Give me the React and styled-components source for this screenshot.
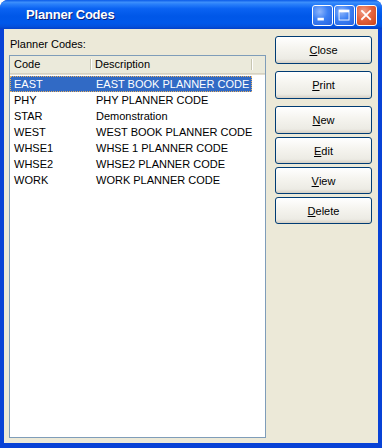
import React from "react";
import styled, { createGlobalStyle } from "styled-components";

const GlobalStyle = createGlobalStyle`
  html, body {
    margin: 0;
    padding: 0;
    background: #ffffff;
  }
  body {
    font-family: "Liberation Sans", Arial, sans-serif;
    font-size: 11px;
  }
`;

const Window = styled.div`
  width: 382px;
  height: 448px;
  display: flex;
  flex-direction: column;
  background: #0842d6;
  border-radius: 8px 8px 0 0;
  overflow: hidden;
`;

const TitleBar = styled.div`
  height: 29px;
  flex-shrink: 0;
  display: flex;
  align-items: center;
  padding: 0 5px 0 26px;
  background: linear-gradient(
    180deg,
    #0a5ae8 0%,
    #3d8ffb 8%,
    #2a80fa 14%,
    #0a62f2 30%,
    #0057e8 55%,
    #0058ea 80%,
    #0350dc 92%,
    #0340c8 100%
  );
`;

const Title = styled.div`
  flex: 1;
  color: #ffffff;
  font-family: "Liberation Sans", Arial, sans-serif;
  font-weight: bold;
  font-size: 13px;
  letter-spacing: -0.2px;
  text-shadow: 1px 1px 0 #0a1f7a;
`;

const Controls = styled.div`
  display: flex;
  gap: 1px;
  margin-top: 1px;
`;

const CtlButton = styled.div`
  width: 21px;
  height: 21px;
  box-sizing: border-box;
  border: 1px solid #ffffff;
  border-radius: 3px;
  display: flex;
  align-items: center;
  justify-content: center;
  background: ${(p) =>
    p.$close
      ? "radial-gradient(circle at 35% 30%, #f0a08a 0%, #e4643f 45%, #cc4418 100%)"
      : "radial-gradient(circle at 35% 30%, #8fb6fb 0%, #3c80f4 45%, #2461e0 100%)"};
`;

const Body = styled.div`
  flex: 1;
  margin: 0 4px 5px 4px;
  background: #ece9d8;
  display: flex;
  gap: 9px;
  padding: 7px 0 0 5px;
`;

const LeftPane = styled.div`
  display: flex;
  flex-direction: column;
  width: 257px;
`;

const Label = styled.div`
  color: #000000;
  height: 19px;
  line-height: 17px;
  padding-left: 1px;
`;

const ListBox = styled.div`
  flex: 1;
  margin-bottom: 5px;
  border: 1px solid #7f9db9;
  background: #ffffff;
`;

const HeaderRow = styled.div`
  display: flex;
  height: 17px;
  background: #ebeadb;
  border-bottom: 1px solid #d6d2c2;
  box-shadow: 0 1px 0 #e2ded0, 0 2px 0 #ffffff;
  margin-bottom: 2px;
`;

const HeaderCell = styled.div`
  width: ${(p) => p.$w}px;
  box-sizing: border-box;
  padding-left: 4px;
  line-height: 17px;
  color: #000000;
  position: relative;
  &::after {
    content: "";
    position: absolute;
    right: 0;
    top: 3px;
    bottom: 3px;
    width: 1px;
    background: #c7c5b2;
    box-shadow: 1px 0 0 #ffffff;
  }
`;

const Row = styled.div`
  display: flex;
  height: 16px;
  width: 242px;
  box-sizing: border-box;
  align-items: center;
  color: ${(p) => (p.$selected ? "#ffffff" : "#000000")};
  background: ${(p) => (p.$selected ? "#316ac5" : "transparent")};
  border: 1px dotted ${(p) => (p.$selected ? "#e8b060" : "transparent")};
`;

const Cell = styled.div`
  width: ${(p) => p.$w}px;
  padding-left: 3px;
  box-sizing: border-box;
  white-space: nowrap;
`;

const ButtonColumn = styled.div`
  display: flex;
  flex-direction: column;
  width: 97px;
`;

const ButtonGroup = styled.div`
  display: flex;
  flex-direction: column;
  gap: ${(p) => p.$gap}px;
  margin-bottom: ${(p) => p.$after}px;
`;

const Button = styled.div`
  height: ${(p) => p.$h}px;
  box-sizing: border-box;
  border: 1px solid #003c74;
  border-radius: 3px;
  background: linear-gradient(180deg, #ffffff 0%, #f6f5f0 40%, #ecebe4 85%, #d6d0c5 100%);
  display: flex;
  align-items: center;
  justify-content: center;
  color: #000000;
  u {
    text-decoration: underline;
  }
`;

const codes = [
  ["EAST", "EAST BOOK PLANNER CODE"],
  ["PHY", "PHY PLANNER CODE"],
  ["STAR", "Demonstration"],
  ["WEST", "WEST BOOK PLANNER CODE"],
  ["WHSE1", "WHSE 1 PLANNER CODE"],
  ["WHSE2", "WHSE2 PLANNER CODE"],
  ["WORK", "WORK PLANNER CODE"],
];

function Accel({ label }) {
  return (
    <>
      <u>{label[0]}</u>
      {label.slice(1)}
    </>
  );
}

export default function App() {
  return (
    <>
      <GlobalStyle />
      <Window>
        <TitleBar>
          <Title>Planner Codes</Title>
          <Controls>
            <CtlButton>
              <svg width="21" height="21" viewBox="0 0 21 21">
                <rect x="5" y="13" width="7" height="3" fill="#ffffff" />
              </svg>
            </CtlButton>
            <CtlButton>
              <svg width="21" height="21" viewBox="0 0 21 21">
                <rect x="4.5" y="4.5" width="11" height="11" fill="none" stroke="#ffffff" strokeWidth="1" />
                <rect x="4.5" y="4.5" width="11" height="2.5" fill="#ffffff" />
              </svg>
            </CtlButton>
            <CtlButton $close>
              <svg width="21" height="21" viewBox="0 0 21 21">
                <path d="M5.5 5.5 L14.5 14.5 M14.5 5.5 L5.5 14.5" stroke="#ffffff" strokeWidth="2" strokeLinecap="square" />
              </svg>
            </CtlButton>
          </Controls>
        </TitleBar>
        <Body>
          <LeftPane>
            <Label>Planner Codes:</Label>
            <ListBox>
              <HeaderRow>
                <HeaderCell $w={81}>Code</HeaderCell>
                <HeaderCell $w={161}>Description</HeaderCell>
              </HeaderRow>
              {codes.map(([code, desc], i) => (
                <Row key={code} $selected={i === 0}>
                  <Cell $w={82}>{code}</Cell>
                  <Cell $w={158}>{desc}</Cell>
                </Row>
              ))}
            </ListBox>
          </LeftPane>
          <ButtonColumn>
            <ButtonGroup $gap={7} $after={7}>
              <Button $h={28}>
                <Accel label="Close" />
              </Button>
              <Button $h={28}>
                <Accel label="Print" />
              </Button>
            </ButtonGroup>
            <ButtonGroup $gap={3} $after={0}>
              <Button $h={28}>
                <Accel label="New" />
              </Button>
              <Button $h={27}>
                <Accel label="Edit" />
              </Button>
              <Button $h={27}>
                <Accel label="View" />
              </Button>
              <Button $h={27}>
                <Accel label="Delete" />
              </Button>
            </ButtonGroup>
          </ButtonColumn>
        </Body>
      </Window>
    </>
  );
}
